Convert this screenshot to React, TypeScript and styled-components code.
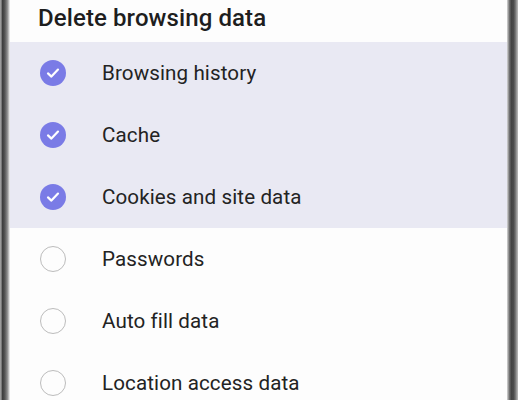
import React, { useState } from 'react';
import styled, { createGlobalStyle } from 'styled-components';

const GlobalStyle = createGlobalStyle`
  html, body {
    margin: 0;
    padding: 0;
    background: #ffffff;
  }
  body {
    font-family: Roboto, "Noto Sans", "Liberation Sans", sans-serif;
  }
`;

const Phone = styled.div`
  display: flex;
  width: 518px;
  height: 400px;
  overflow: hidden;
`;

const Bezel = styled.div<{ side: 'left' | 'right' }>`
  flex: 0 0 ${props => (props.side === 'left' ? '10px' : '11px')};
  background: ${props =>
    props.side === 'left'
      ? 'linear-gradient(90deg, #a8a8a8 0%, #8a8a8a 12%, #3f3f3f 25%, #4a4a4a 40%, #6d6d6d 60%, #9a9a9a 78%, #d6d6d6 92%, #f4f4f4 100%)'
      : 'linear-gradient(90deg, #d8d8d8 0%, #a9a9a9 10%, #707070 22%, #434343 40%, #4c4c4c 60%, #6e6e6e 75%, #9b9b9b 88%, #bdbdbd 100%)'};
`;

const Screen = styled.div`
  flex: 1;
  display: flex;
  flex-direction: column;
  background: #fdfdfd;
`;

const Title = styled.h1`
  flex: 0 0 42px;
  margin: 0;
  padding: 0 0 6px 28px;
  box-sizing: border-box;
  display: flex;
  align-items: center;
  font-size: 24px;
  font-weight: 500;
  color: #1e1e1e;
  letter-spacing: 0.1px;
`;

const List = styled.ul`
  flex: 0 0 auto;
  list-style: none;
  margin: 0;
  padding: 0;
`;

const Row = styled.li<{ checked: boolean }>`
  display: flex;
  align-items: center;
  height: 62px;
  padding-left: 30px;
  gap: 36px;
  background: ${props => (props.checked ? '#e9e9f3' : 'transparent')};
  cursor: pointer;
`;

const Check = styled.span<{ checked: boolean }>`
  flex: 0 0 auto;
  width: 26px;
  height: 26px;
  box-sizing: border-box;
  border-radius: 50%;
  display: flex;
  align-items: center;
  justify-content: center;
  background: ${props => (props.checked ? '#7a7be6' : 'transparent')};
  border: ${props => (props.checked ? 'none' : '1.6px solid #bcbcbc')};
`;

const Label = styled.span`
  font-size: 20.6px;
  color: #232323;
  letter-spacing: 0.1px;
`;

const items = [
  { label: 'Browsing history', checked: true },
  { label: 'Cache', checked: true },
  { label: 'Cookies and site data', checked: true },
  { label: 'Passwords', checked: false },
  { label: 'Auto fill data', checked: false },
  { label: 'Location access data', checked: false },
];

export default function App() {
  const [state, setState] = useState(items);

  const toggle = (i: number) => {
    setState(s => s.map((it, j) => (j === i ? { ...it, checked: !it.checked } : it)));
  };

  return (
    <>
      <GlobalStyle />
      <Phone>
        <Bezel side="left" />
        <Screen>
          <Title>Delete browsing data</Title>
          <List>
            {state.map((it, i) => (
              <Row key={it.label} checked={it.checked} onClick={() => toggle(i)}>
                <Check checked={it.checked}>
                  {it.checked && (
                    <svg width="16" height="16" viewBox="0 0 16 16">
                      <path
                        d="M3 8.4 L6.4 11.6 L13 4.6"
                        fill="none"
                        stroke="#ffffff"
                        strokeWidth="2.2"
                        strokeLinecap="round"
                        strokeLinejoin="round"
                      />
                    </svg>
                  )}
                </Check>
                <Label>{it.label}</Label>
              </Row>
            ))}
          </List>
        </Screen>
        <Bezel side="right" />
      </Phone>
    </>
  );
}
